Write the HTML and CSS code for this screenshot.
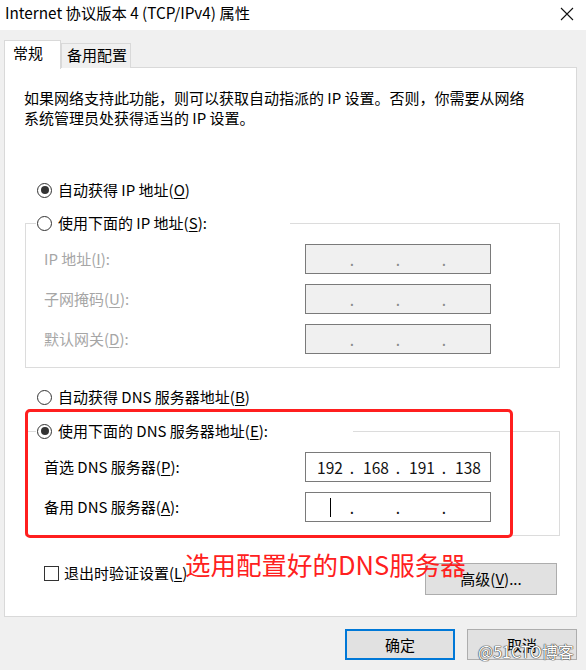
FILE: index.html
```html
<!DOCTYPE html>
<html lang="zh-CN">
<head>
  <meta charset="UTF-8">
  <title>Internet 协议版本 4 (TCP/IPv4) 属性</title>
  <link rel="stylesheet" href="styles.css">
</head>
<body>
  <div class="titlebar">
    <span class="title">Internet 协议版本 4 (TCP/IPv4) 属性</span>
    <svg class="close" width="14" height="14" viewBox="0 0 14 14">
      <path d="M1 1 L13 13 M13 1 L1 13" stroke="#111" stroke-width="1.1" fill="none"/>
    </svg>
  </div>

  <div class="tabs">
    <div class="tab active">常规</div>
    <div class="tab">备用配置</div>
  </div>

  <div class="panel">
    <p class="desc">如果网络支持此功能，则可以获取自动指派的 IP 设置。否则，你需要从网络<br>系统管理员处获得适当的 IP 设置。</p>

    <label class="option opt-auto-ip"><span class="radio checked"></span>自动获得 IP 地址(<u>O</u>)</label>

    <fieldset class="group group-ip">
      <legend class="legend-ip"><span class="radio"></span>使用下面的 IP 地址(<u>S</u>):</legend>
      <div class="row first">
        <span class="label disabled">IP 地址(<u>I</u>):</span>
        <div class="ipfield off"><span class="oct"></span><span class="dot">.</span><span class="oct"></span><span class="dot">.</span><span class="oct"></span><span class="dot">.</span><span class="oct"></span></div>
      </div>
      <div class="row">
        <span class="label disabled">子网掩码(<u>U</u>):</span>
        <div class="ipfield off"><span class="oct"></span><span class="dot">.</span><span class="oct"></span><span class="dot">.</span><span class="oct"></span><span class="dot">.</span><span class="oct"></span></div>
      </div>
      <div class="row">
        <span class="label disabled">默认网关(<u>D</u>):</span>
        <div class="ipfield off"><span class="oct"></span><span class="dot">.</span><span class="oct"></span><span class="dot">.</span><span class="oct"></span><span class="dot">.</span><span class="oct"></span></div>
      </div>
    </fieldset>

    <label class="option opt-auto-dns"><span class="radio"></span>自动获得 DNS 服务器地址(<u>B</u>)</label>

    <fieldset class="group group-dns">
      <legend class="legend-dns"><span class="radio checked"></span>使用下面的 DNS 服务器地址(<u>E</u>):</legend>
      <div class="row first">
        <span class="label">首选 DNS 服务器(<u>P</u>):</span>
        <div class="ipfield"><span class="oct">192</span><span class="dot">.</span><span class="oct">168</span><span class="dot">.</span><span class="oct">191</span><span class="dot">.</span><span class="oct">138</span></div>
      </div>
      <div class="row">
        <span class="label">备用 DNS 服务器(<u>A</u>):</span>
        <div class="ipfield"><span class="oct"><i class="caret"></i></span><span class="dot">.</span><span class="oct"></span><span class="dot">.</span><span class="oct"></span><span class="dot">.</span><span class="oct"></span></div>
      </div>
    </fieldset>

    <div class="footer-row">
      <label class="check"><span class="box"></span>退出时验证设置(<u>L</u>)</label>
      <button class="btn advanced">高级(<u>V</u>)...</button>
    </div>
  </div>

  <div class="actions">
    <button class="btn ok">确定</button>
    <button class="btn">取消</button>
  </div>

  <!-- 标注 -->
  <div class="mark-box"></div>
  <div class="mark-text">选用配置好的DNS服务器</div>
  <div class="watermark">@51CTO博客</div>
</body>
</html>
```

FILE: styles.css
```css
* {
  margin: 0;
  padding: 0;
  box-sizing: border-box;
}

body {
  width: 586px;
  height: 670px;
  overflow: hidden;
  position: relative;
  background: #f0f0f0;
  font-family: "Noto Sans CJK SC", "Noto Sans", sans-serif;
  font-size: 15px;
  line-height: 20px;
  color: #000;
}

u {
  text-decoration: underline;
  text-underline-offset: 2px;
}

/* 标题栏 */
.titlebar {
  height: 30px;
  background: #fff;
  display: flex;
  align-items: center;
  justify-content: space-between;
  padding: 0 12px 6px 5px;
}

.title {
  font-size: 15.3px;
}

.close {
  margin-top: 4px;
}

/* 选项卡 */
.tabs {
  display: flex;
  align-items: flex-end;
  margin: 10px 0 0 4px;
  height: 28px;
  position: relative;
  z-index: 1;
}

.tab {
  height: 25px;
  padding: 0 3px 0 5px;
  border: 1px solid #d9d9d9;
  border-bottom: none;
  background: #f0f0f0;
  line-height: 22px;
}

.tab.active {
  width: 57px;
  height: 29px;
  padding: 0 0 0 8px;
  background: #fff;
  line-height: 24px;
  margin-bottom: -1px;
}

.panel {
  width: 573px;
  height: 550px;
  margin: -1px 0 0 4px;
  background: #fff;
  border: 1px solid #d9d9d9;
  display: flex;
  flex-direction: column;
}

.desc {
  margin: 20px 0 0 19px;
}

/* 单选项 */
.option {
  display: flex;
  align-items: center;
  height: 20px;
  margin-left: 32px;
}

.opt-auto-ip {
  margin-top: 52px;
}

.opt-auto-dns {
  margin-top: 19px;
}

.radio {
  width: 15px;
  height: 15px;
  border: 1px solid #333;
  border-radius: 50%;
  background: #fff;
  margin-right: 6px;
  display: inline-flex;
  align-items: center;
  justify-content: center;
  flex-shrink: 0;
}

.radio.checked::after {
  content: "";
  width: 8px;
  height: 8px;
  border-radius: 50%;
  background: #333;
}

/* 分组框 */
.group {
  width: 535px;
  margin-left: 20px;
  border: 1px solid #dcdcdc;
  padding: 0 0 13px 0;
}

.group-ip {
  margin-top: 13px;
}

.group-dns {
  margin-top: 14px;
}

.group legend {
  display: flex;
  align-items: center;
  height: 20px;
  margin-left: 10px;
  padding: 0 1px;
}

.legend-ip {
  width: 254px;
}

.legend-dns {
  width: 317px;
}

.row {
  display: flex;
  align-items: center;
  margin-top: 10px;
  padding-left: 18px;
}

.row.first {
  margin-top: 11px;
}

.label {
  width: 261px;
}

.label.disabled {
  color: #a6a6a6;
}

.ipfield {
  width: 186px;
  height: 30px;
  border: 1px solid #7a7a7a;
  background: #fff;
  display: flex;
  align-items: center;
  padding-left: 11px;
  font-size: 15.5px;
  color: #111;
}

.ipfield.off {
  background: #f0f0f0;
  color: #8a8a8a;
}

.oct {
  width: 26px;
  text-align: center;
  display: flex;
  justify-content: center;
}

.dot {
  width: 20px;
  text-align: center;
  padding-right: 2px;
}

.caret {
  width: 1px;
  height: 19px;
  background: #000;
  display: block;
}

/* 底部 */
.footer-row {
  display: flex;
  justify-content: space-between;
  align-items: flex-start;
  margin: 27px 0 0 39px;
  padding-right: 19px;
}

.check {
  display: flex;
  align-items: center;
  height: 20px;
}

.box {
  width: 15px;
  height: 15px;
  border: 1px solid #333;
  background: #fff;
  margin-right: 5px;
}

.btn {
  font: inherit;
  height: 32px;
  width: 110px;
  background: #e1e1e1;
  border: 1px solid #adadad;
  color: #000;
}

.advanced {
  width: 132px;
}

.actions {
  display: flex;
  justify-content: flex-end;
  gap: 12px;
  margin-top: 12px;
  padding-right: 9px;
}

.actions .btn {
  height: 31px;
}

.btn.ok {
  border: 2px solid #0078d7;
}

/* 红色标注 */
.mark-box {
  position: absolute;
  left: 25px;
  top: 409px;
  width: 488px;
  height: 129px;
  border: 3px solid #ff1f1f;
  border-radius: 5px;
}

.mark-text {
  position: absolute;
  left: 185px;
  top: 550px;
  font-size: 25.5px;
  line-height: 28px;
  color: #ff2020;
}

.watermark {
  position: absolute;
  left: 478px;
  top: 641px;
  font-size: 16px;
  color: #fff;
  text-shadow: 0 0 1px #333, 0 0 1px #333, 0 0 1px #333;
}
```
